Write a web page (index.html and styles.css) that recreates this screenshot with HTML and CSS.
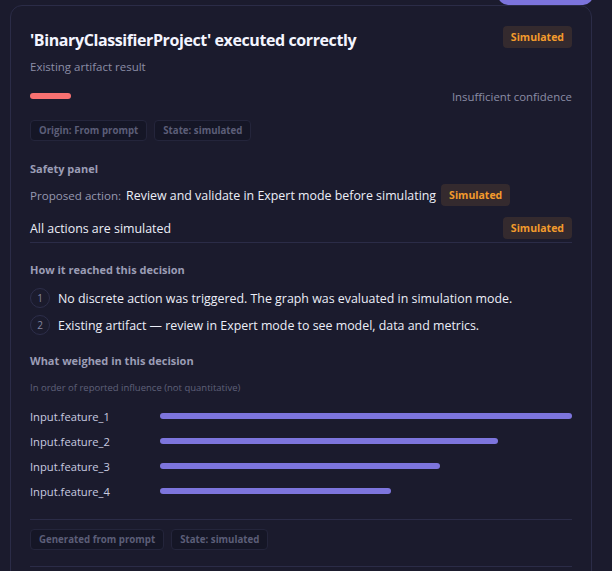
FILE: index.html
```html
<!DOCTYPE html>
<html lang="en">
<head>
<meta charset="utf-8">
<title>Decision</title>
<link rel="stylesheet" href="styles.css">
</head>
<body>
<div class="top-tab"></div>
<section class="card">
  <header class="head">
    <h1 class="title">'BinaryClassifierProject' executed correctly</h1>
    <span class="badge">Simulated</span>
  </header>
  <p class="subtitle">Existing artifact result</p>
  <div class="confidence">
    <span class="conf-bar"></span>
    <span class="conf-label">Insufficient confidence</span>
  </div>
  <div class="chips">
    <span class="chip">Origin: From prompt</span>
    <span class="chip">State: simulated</span>
  </div>

  <h2 class="section-title safety-title">Safety panel</h2>
  <div class="proposed">
    <span class="muted">Proposed action:</span>
    <span class="value">Review and validate in Expert mode before simulating</span>
    <span class="badge">Simulated</span>
  </div>
  <div class="all-actions">
    <span class="value">All actions are simulated</span>
    <span class="badge">Simulated</span>
  </div>

  <h2 class="section-title how-title">How it reached this decision</h2>
  <ol class="steps">
    <li class="step"><span class="num">1</span><span class="value">No discrete action was triggered. The graph was evaluated in simulation mode.</span></li>
    <li class="step"><span class="num">2</span><span class="value">Existing artifact — review in Expert mode to see model, data and metrics.</span></li>
  </ol>

  <h2 class="section-title weigh-title">What weighed in this decision</h2>
  <p class="hint">In order of reported influence (not quantitative)</p>
  <div class="features">
    <div class="feature"><span class="f-label">Input.feature_1</span><span class="track"><span class="fill" style="width:100%"></span></span></div>
    <div class="feature"><span class="f-label">Input.feature_2</span><span class="track"><span class="fill" style="width:82%"></span></span></div>
    <div class="feature"><span class="f-label">Input.feature_3</span><span class="track"><span class="fill" style="width:68%"></span></span></div>
    <div class="feature"><span class="f-label">Input.feature_4</span><span class="track"><span class="fill" style="width:56%"></span></span></div>
  </div>

  <div class="footer-chips">
    <span class="chip">Generated from prompt</span>
    <span class="chip">State: simulated</span>
  </div>
</section>
</body>
</html>
```
FILE: styles.css
```css
* { box-sizing: border-box; }
html, body { margin: 0; padding: 0; }
body {
  background: #1b1b2d;
  font-family: "Open Sans", "Noto Sans", sans-serif;
  color: #e8e9f5;
  width: 612px;
  height: 571px;
  overflow: hidden;
  position: relative;
}
.top-tab {
  position: absolute;
  left: 498px;
  top: -20px;
  width: 95px;
  height: 25px;
  background: #7c74dc;
  border-radius: 10px;
}
.card {
  margin: 5px 20px 0 10px;
  border: 1px solid #2b2c47;
  border-radius: 12px;
  padding: 20px 19px 0 19px;
  background: #1b1b2d;
  min-height: 580px;
}
.head {
  display: flex;
  justify-content: space-between;
  align-items: flex-start;
  height: 29px;
}
.title {
  margin: 2px 0 0;
  font-size: 16px;
  font-weight: 700;
  letter-spacing: -0.4px;
  line-height: 24px;
  color: #f4f5ff;
}
.badge {
  display: inline-flex;
  align-items: center;
  height: 22px;
  padding: 0 8px;
  border-radius: 4px;
  background: #342a2e;
  color: #f39b2c;
  font-size: 10.5px;
  font-weight: 700;
}
.subtitle {
  margin: 4px 0 0;
  font-size: 11.5px;
  line-height: 16px;
  color: #8b8da6;
}
.confidence {
  display: flex;
  justify-content: space-between;
  align-items: center;
  margin-top: 13px;
  height: 16px;
}
.conf-bar {
  width: 41px;
  height: 6px;
  border-radius: 3px;
  background: #f87171;
}
.conf-label {
  font-size: 11.4px;
  color: #8b8da6;
}
.chips, .footer-chips {
  display: flex;
  gap: 7px;
}
.chips { margin-top: 16px; }
.chip {
  display: inline-flex;
  align-items: center;
  height: 21px;
  padding: 0 8px;
  border: 1px solid #24253b;
  border-radius: 4px;
  background: #151626;
  color: #5c5e78;
  font-size: 9.7px;
  font-weight: 700;
}
.section-title {
  margin: 0;
  font-size: 11px;
  font-weight: 700;
  line-height: 16px;
  color: #9b9db5;
}
.safety-title { margin-top: 20px; }
.proposed {
  display: flex;
  align-items: center;
  gap: 5px;
  margin-top: 7px;
  height: 22px;
}
.muted { color: #9698b0; font-size: 11.6px; }
.value { color: #eceef8; font-size: 12.4px; }
.all-actions {
  display: flex;
  justify-content: space-between;
  align-items: center;
  margin-top: 11px;
  height: 22px;
}
.how-title {
  border-top: 1px solid #2b2c47;
  margin-top: 3px;
  padding-top: 19px;
}
.steps {
  list-style: none;
  margin: 10px 0 0;
  padding: 0;
  display: flex;
  flex-direction: column;
  gap: 7px;
}
.step {
  display: flex;
  align-items: center;
  gap: 8px;
  height: 20px;
}
.num {
  width: 20px;
  height: 20px;
  border-radius: 50%;
  border: 1px solid #2d2e4a;
  display: inline-flex;
  align-items: center;
  justify-content: center;
  font-size: 10px;
  color: #8587a0;
}
.weigh-title { margin-top: 18px; }
.hint {
  margin: 12px 0 0;
  font-size: 9.5px;
  line-height: 14px;
  color: #5f6179;
}
.features {
  margin-top: 13px;
  display: flex;
  flex-direction: column;
  gap: 9px;
  padding-bottom: 20px;
  border-bottom: 1px solid #2b2c47;
}
.feature {
  display: flex;
  align-items: center;
  height: 16px;
}
.f-label {
  width: 130px;
  font-size: 11.2px;
  color: #c9cbe0;
}
.track {
  flex: 1;
  height: 6px;
}
.fill {
  display: block;
  height: 6px;
  border-radius: 3px;
  background: #7d75dd;
}
.footer-chips {
  padding: 9px 0 16px;
  border-bottom: 1px solid #2b2c47;
}
```
